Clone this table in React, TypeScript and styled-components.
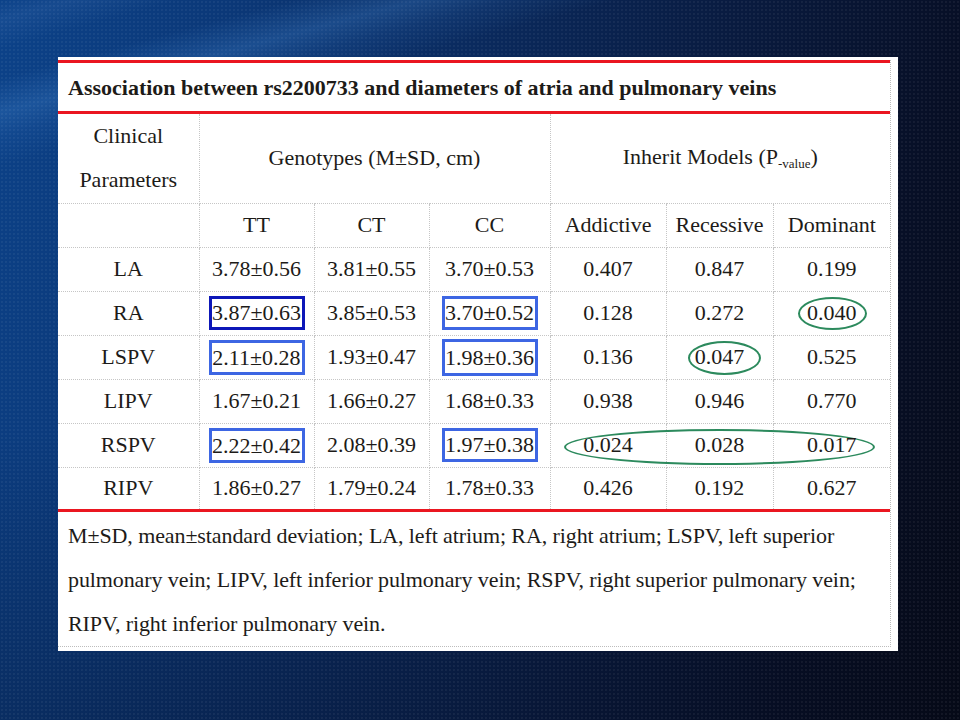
import React from "react";
import styled, { createGlobalStyle } from "styled-components";

interface DataRow {
  name: string;
  tt: string;
  ct: string;
  cc: string;
  add: string;
  rec: string;
  dom: string;
}

const rows: DataRow[] = [
  { name: "LA", tt: "3.78±0.56", ct: "3.81±0.55", cc: "3.70±0.53", add: "0.407", rec: "0.847", dom: "0.199" },
  { name: "RA", tt: "3.87±0.63", ct: "3.85±0.53", cc: "3.70±0.52", add: "0.128", rec: "0.272", dom: "0.040" },
  { name: "LSPV", tt: "2.11±0.28", ct: "1.93±0.47", cc: "1.98±0.36", add: "0.136", rec: "0.047", dom: "0.525" },
  { name: "LIPV", tt: "1.67±0.21", ct: "1.66±0.27", cc: "1.68±0.33", add: "0.938", rec: "0.946", dom: "0.770" },
  { name: "RSPV", tt: "2.22±0.42", ct: "2.08±0.39", cc: "1.97±0.38", add: "0.024", rec: "0.028", dom: "0.017" },
  { name: "RIPV", tt: "1.86±0.27", ct: "1.79±0.24", cc: "1.78±0.33", add: "0.426", rec: "0.192", dom: "0.627" },
];

const widths = [141, 115, 115, 121, 116, 107, 117];

const serif = `"Liberation Serif", "Times New Roman", Times, serif`;

const GlobalStyle = createGlobalStyle`
  html, body {
    margin: 0;
    padding: 0;
  }
  body {
    width: 960px;
    height: 720px;
    overflow: hidden;
    font-family: ${serif};
  }
`;

const Slide = styled.div`
  width: 960px;
  height: 720px;
  box-sizing: border-box;
  padding: 57px 0 0 58px;
  background:
    radial-gradient(circle, rgba(255, 255, 255, 0.05) 0.7px, transparent 1.1px) 0 0 / 4px 4px,
    linear-gradient(165deg, transparent 0%, rgba(120, 170, 230, 0.1) 2%, transparent 5%, transparent 8%,
      rgba(70, 140, 215, 0.28) 11.5%, rgba(60, 130, 210, 0.12) 14%, transparent 17%),
    linear-gradient(180deg, rgba(0, 0, 0, 0) 60%, rgba(4, 8, 24, 0.25) 100%),
    linear-gradient(105deg, #0c4289 0%, #0b3878 20%, #0a2a5e 42%, #091b40 64%, #070f26 84%, #060a17 100%);
`;

const Panel = styled.div`
  width: 840px;
  height: 594px;
  box-sizing: border-box;
  background: #ffffff;
  padding-top: 3px;
`;

const Sheet = styled.div`
  width: 832px;
  border-right: 1px dotted #bdbdbd;
  border-bottom: 1px dotted #bdbdbd;
  color: #1d1b18;
  font-family: ${serif};
  font-size: 22px;
`;

const RedRule = styled.div`
  height: 3px;
  background: #ea1620;
`;

const Title = styled.div`
  height: 48px;
  line-height: 50px;
  padding-left: 10px;
  font-family: ${serif};
  font-weight: bold;
  font-size: 22px;
  white-space: nowrap;
`;

const Table = styled.table`
  width: 832px;
  table-layout: fixed;
  border-collapse: collapse;
  font-family: ${serif};
  font-size: 22px;
  color: #1d1b18;
`;

const Col = styled.col<{ $w: number }>`
  width: ${(p) => p.$w}px;
`;

const Row = styled.tr<{ $h: number }>`
  height: ${(p) => p.$h}px;
`;

const Cell = styled.td<{ $first?: boolean; $last?: boolean; $top?: boolean; $bottom?: boolean }>`
  position: relative;
  padding: 0;
  text-align: center;
  vertical-align: middle;
  line-height: 28px;
  white-space: nowrap;
  font-family: ${serif};
  font-size: 22px;
  border-left: ${(p) => (p.$first ? "none" : "1px dotted #c6c6c6")};
  border-right: ${(p) => (p.$last ? "none" : "1px dotted #c6c6c6")};
  border-top: ${(p) => (p.$top ? "none" : "1px dotted #c6c6c6")};
  border-bottom: ${(p) => (p.$bottom ? "none" : "1px dotted #c6c6c6")};
`;

const Stack = styled.div`
  line-height: 44px;
`;

const Sub = styled.span`
  position: relative;
  top: 4px;
  font-size: 13px;
`;

const Box = styled.span<{ $dark?: boolean; $h?: number }>`
  display: inline-block;
  box-sizing: border-box;
  width: 96px;
  height: ${(p) => p.$h ?? 34}px;
  line-height: ${(p) => (p.$h ?? 34) - 6}px;
  vertical-align: middle;
  border: ${(p) => (p.$dark ? "3px solid #0d17b8" : "3px solid #3d66e3")};
`;

const Oval = styled.span<{ $x: number; $y: number; $w: number; $h: number }>`
  position: absolute;
  left: ${(p) => p.$x}px;
  top: ${(p) => p.$y}px;
  width: ${(p) => p.$w}px;
  height: ${(p) => p.$h}px;
  box-sizing: border-box;
  border: 2.5px solid #2c8a5d;
  border-radius: 50%;
  pointer-events: none;
`;

const Footnote = styled.div`
  padding: 2px 10px 0;
  height: 132px;
  line-height: 44px;
  font-family: ${serif};
  font-size: 22px;
  letter-spacing: -0.1px;
  white-space: nowrap;
`;

const boxed: Record<string, { tt?: boolean; ttDark?: boolean; cc?: boolean; ttH?: number; ccH?: number }> = {
  RA: { tt: true, ttDark: true, cc: true },
  LSPV: { tt: true, cc: true, ttH: 35, ccH: 37 },
  RSPV: { tt: true, cc: true, ttH: 35 },
};

const App: React.FC = () => {
  return (
    <>
      <GlobalStyle />
      <Slide>
        <Panel>
          <Sheet>
            <RedRule />
            <Title>Association between rs2200733 and diameters of atria and pulmonary veins</Title>
            <RedRule />
            <Table>
              <colgroup>
                {widths.map((w, i) => (
                  <Col key={i} $w={w} />
                ))}
              </colgroup>
              <tbody>
                <Row $h={89}>
                  <Cell $first $top>
                    <Stack>
                      Clinical
                      <br />
                      Parameters
                    </Stack>
                  </Cell>
                  <Cell $top colSpan={3}>
                    Genotypes (M±SD, cm)
                  </Cell>
                  <Cell $top $last colSpan={3}>
                    Inherit Models (P<Sub>-value</Sub>)
                  </Cell>
                </Row>
                <Row $h={44}>
                  <Cell $first />
                  <Cell>TT</Cell>
                  <Cell>CT</Cell>
                  <Cell>CC</Cell>
                  <Cell>Addictive</Cell>
                  <Cell>Recessive</Cell>
                  <Cell $last>Dominant</Cell>
                </Row>
                {rows.map((r, i) => {
                  const b = boxed[r.name] ?? {};
                  const isLast = i === rows.length - 1;
                  return (
                    <Row key={r.name} $h={isLast ? 42 : 44}>
                      <Cell $first $bottom={isLast}>
                        {r.name}
                      </Cell>
                      <Cell $bottom={isLast}>
                        {b.tt ? (
                          <Box $dark={b.ttDark} $h={b.ttH}>
                            {r.tt}
                          </Box>
                        ) : (
                          r.tt
                        )}
                      </Cell>
                      <Cell $bottom={isLast}>{r.ct}</Cell>
                      <Cell $bottom={isLast}>
                        {b.cc ? <Box $h={b.ccH}>{r.cc}</Box> : r.cc}
                      </Cell>
                      <Cell $bottom={isLast}>
                        {r.add}
                        {r.name === "RSPV" && <Oval $x={13} $y={5} $w={311} $h={36} />}
                      </Cell>
                      <Cell $bottom={isLast}>
                        {r.rec}
                        {r.name === "LSPV" && <Oval $x={21} $y={5} $w={73} $h={34} />}
                      </Cell>
                      <Cell $last $bottom={isLast}>
                        {r.dom}
                        {r.name === "RA" && <Oval $x={24} $y={5} $w={69} $h={33} />}
                      </Cell>
                    </Row>
                  );
                })}
              </tbody>
            </Table>
            <RedRule />
            <Footnote>
              M±SD, mean±standard deviation; LA, left atrium; RA, right atrium; LSPV, left superior
              <br />
              pulmonary vein; LIPV, left inferior pulmonary vein; RSPV, right superior pulmonary vein;
              <br />
              RIPV, right inferior pulmonary vein.
            </Footnote>
          </Sheet>
        </Panel>
      </Slide>
    </>
  );
};

export default App;
